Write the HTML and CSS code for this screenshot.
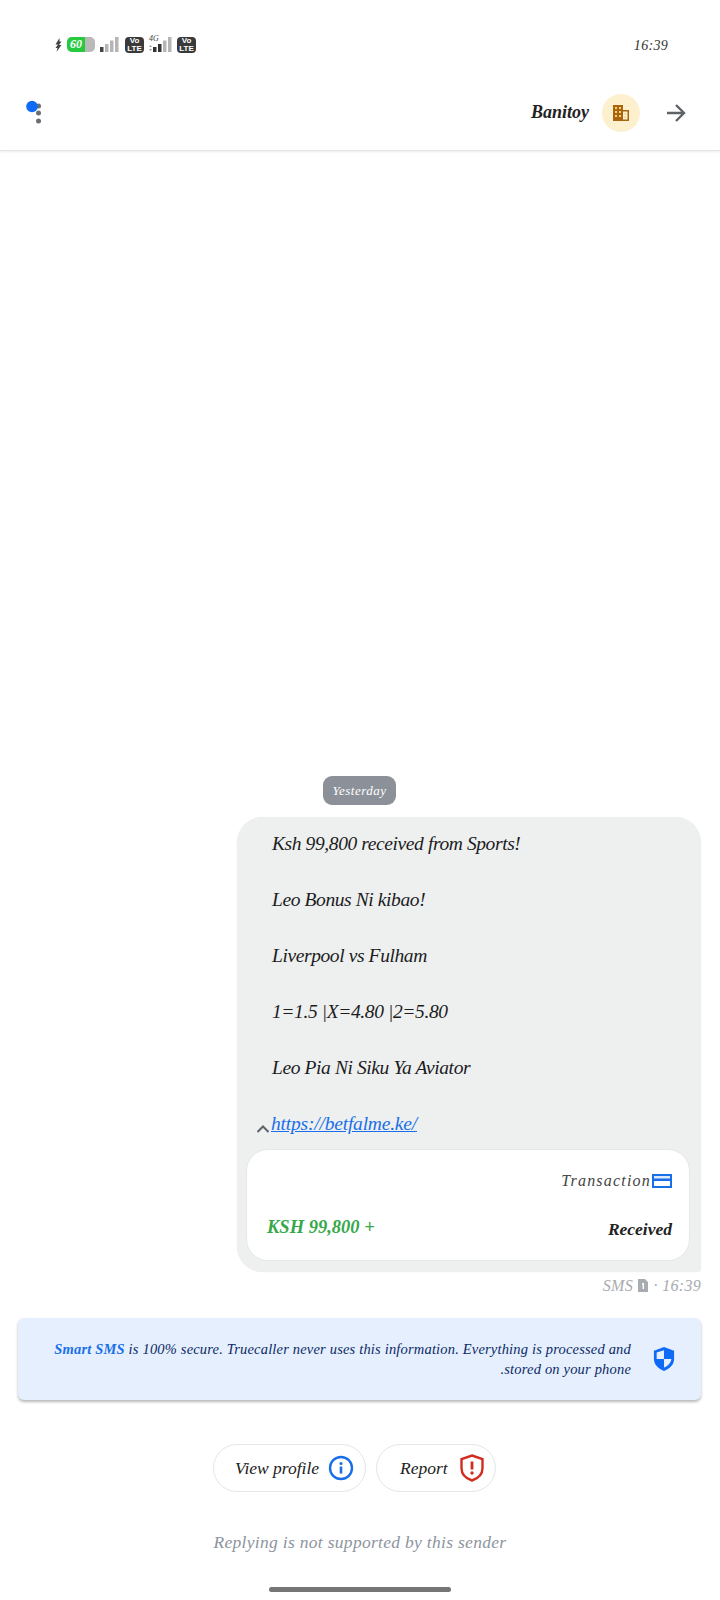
FILE: index.html
```html
<!doctype html>
<html>
<head>
<meta charset="utf-8">
<title>Banitoy</title>
<link rel="stylesheet" href="styles.css">
</head>

<body>
	<div id="page">
		<div class="status">
			<svg class="bolt" width="7" height="14" viewBox="0 0 7 14"><path d="M4.500 0 0.500 6.500 3 6.500 0.500 10 2.500 10 1.500 14 6.500 7 4 7 6.500 3.500 4.500 3.500z" fill="#444"/></svg>
			<div class="battery"><span class="level">60</span></div>
			<svg class="sig" width="19" height="15" viewBox="0 0 19 15"><rect x="0" y="10" width="3.500" height="5" fill="#444"/><rect x="5" y="7" width="3.500" height="8" fill="#b5b5b5"/><rect x="10" y="3.500" width="3.500" height="11.500" fill="#b5b5b5"/><rect x="15" y="0" width="3.500" height="15" fill="#b5b5b5"/></svg>
			<div class="volte">Vo<br>LTE</div>
			<div class="sig4g">
				<span class="net">4G</span>
				<svg width="24" height="15" viewBox="0 0 24 15"><path d="M1 10 2.500 8 4 10zM1 12 2.500 14 4 12z" fill="#999"/><rect x="5" y="10" width="3.500" height="5" fill="#333"/><rect x="10" y="7" width="3.500" height="8" fill="#333"/><rect x="15" y="3.500" width="3.500" height="11.500" fill="#b5b5b5"/><rect x="20" y="0" width="3.500" height="15" fill="#b5b5b5"/></svg>
			</div>
			<div class="volte">Vo<br>LTE</div>
			<span class="clock">16:39</span>
		</div>

		<div class="head">
			<svg class="menu" width="16" height="26" viewBox="0 0 16 26"><circle cx="12.500" cy="6" r="2.500" fill="#6b6f75"/><circle cx="12.500" cy="13" r="2.500" fill="#6b6f75"/><circle cx="12.500" cy="21" r="2.500" fill="#6b6f75"/><circle cx="6" cy="6.500" r="5.800" fill="#0f6bf5"/></svg>
			<span class="name">Banitoy</span>
			<div class="avatar">
				<svg width="16" height="16" viewBox="0 0 16 16"><path d="M0 0h10v5h6v11H0z" fill="#a9660f"/><path d="M10 6.500h4.500v8H10z" fill="#fdf0cf"/><path d="M2 2h2v2H2zM6 2h2v2H6zM2 6h2v2H2zM6 6h2v2H6zM2 10h2v2H2zM6 10h2v2H6zM11.500 8h1.500v1.500h-1.500zM11.500 11.500h1.500v1.500h-1.500z" fill="#f3cf78"/></svg>
			</div>
			<svg class="back" width="20" height="20" viewBox="0 0 20 20"><path d="M1 10h17M10 2l8 8-8 8" fill="none" stroke="#5f6368" stroke-width="2.400"/></svg>
		</div>

		<div class="thread">
			<span class="date">Yesterday</span>
			<div class="bubble">
				<p class="line">Ksh 99,800 received from Sports!</p>
				<p class="line">Leo Bonus Ni kibao!</p>
				<p class="line">Liverpool vs Fulham</p>
				<p class="line">1=1.5 |X=4.80 |2=5.80</p>
				<p class="line">Leo Pia Ni Siku Ya Aviator</p>
				<div class="linkrow">
					<svg width="14" height="10" viewBox="0 0 14 10"><path d="M1.500 8 7 2.500 12.500 8" fill="none" stroke="#5f6368" stroke-width="2"/></svg>
					<a href="javascript:;">https://betfalme.ke/</a>
				</div>
				<div class="card">
					<div class="cardtop">
						<span class="kind">Transaction</span>
						<svg width="20" height="14" viewBox="0 0 20 14"><rect x="0" y="0" width="20" height="14" fill="#1a6fe8"/><rect x="2" y="2" width="16" height="2.500" fill="#dbe9fc"/><rect x="2" y="7" width="16" height="5" fill="#fff"/></svg>
					</div>
					<div class="cardrow">
						<span class="amount">KSH 99,800 +</span>
						<span class="state">Received</span>
					</div>
				</div>
			</div>
			<div class="meta">SMS
				<svg width="12" height="13" viewBox="0 0 12 13"><path d="M1 0h7l3 3v10H1z" fill="#a8abaf"/><path d="M5 4h2v6H5.600V5.500H5z" fill="#fff"/></svg>
				· 16:39</div>
		</div>

		<div class="notice">
			<p class="noticetext" dir="rtl"><span class="noticeline"><b>Smart SMS</b> is 100% secure. Truecaller never uses this information. Everything is processed and</span><span class="noticeline">stored on your phone.</span></p>
			<svg width="22" height="26" viewBox="0 0 24 28"><path d="M12 1 23 5v9c0 6-5 11-11 13C6 25 1 20 1 14V5z" fill="#0f6bf5"/><path d="M12 4.500v9.500H4V6.800zM12 14h8c-.4 4.300-4 7.900-8 9.300z" fill="#e5effd"/></svg>
		</div>

		<div class="btns">
			<a class="btn btnview" href="javascript:;">View profile
				<svg width="26" height="26" viewBox="0 0 26 26"><circle cx="13" cy="13" r="11" fill="none" stroke="#1a6fe8" stroke-width="2.400"/><circle cx="13" cy="8.500" r="1.600" fill="#1a6fe8"/><rect x="11.700" y="11.500" width="2.600" height="7" fill="#1a6fe8"/></svg>
			</a>
			<a class="btn btnreport" href="javascript:;">Report
				<svg width="24" height="28" viewBox="0 0 24 28"><path d="M12 1.500 22.500 5v9c0 6-4.500 10.500-10.500 12.500C6 24.500 1.500 20 1.500 14V5z" fill="none" stroke="#d12c1f" stroke-width="2.400"/><rect x="10.600" y="7.500" width="2.800" height="8" fill="#d12c1f"/><circle cx="12" cy="19" r="1.700" fill="#d12c1f"/></svg>
			</a>
		</div>

		<p class="noreply">Replying is not supported by this sender</p>
		<div class="homebar"></div>
	</div>
</body>
</html>
```

FILE: styles.css
```css
*{
	margin: 0;
	padding: 0;
	box-sizing: border-box;
}
body{
	background: #fff;
	font-family: "Liberation Serif", serif;
	font-style: italic;
	color: #1c1c1e;
}
#page{
	width: 720px;
	height: 1600px;
	display: flex;
	flex-direction: column;
	overflow: hidden;
}

/* status bar */
.status{
	height: 90px;
	padding: 37px 52px 0 55px;
	display: flex;
	align-items: flex-start;
}
.status .bolt{
	margin-top: 1px;
}
.battery{
	width: 28px;
	height: 15px;
	margin-left: 5px;
	border-radius: 5px;
	overflow: hidden;
	background: #b9b9b9;
}
.level{
	display: block;
	width: 18px;
	height: 15px;
	background: #27c93f;
	color: #fff;
	font-size: 12px;
	font-weight: bold;
	line-height: 15px;
	text-align: center;
}
.sig{
	margin-left: 5px;
}
.volte{
	width: 19px;
	height: 16px;
	margin-left: 6px;
	border-radius: 4px;
	background: #3a3a3a;
	color: #fff;
	font: bold 8px/7.500px "Liberation Sans", sans-serif;
	text-align: center;
}
.sig4g{
	position: relative;
	margin-left: 4px;
}
.net{
	position: absolute;
	top: -3px;
	left: 1px;
	font-size: 8px;
	color: #444;
}
.sig4g + .volte{
	margin-left: 5px;
}
.clock{
	margin-left: auto;
	font-size: 14px;
	letter-spacing: .3px;
	color: #333;
	line-height: 17px;
}

/* header */
.head{
	height: 61px;
	padding: 0 34px 15px 26px;
	display: flex;
	align-items: center;
	border-bottom: 1px solid #e4e4e4;
	box-shadow: 0 1px 2px rgba(0,0,0,.08);
}
.menu{
	margin-right: auto;
}
.name{
	font-size: 18px;
	font-weight: bold;
	color: #222;
}
.avatar{
	width: 38px;
	height: 38px;
	margin-left: 13px;
	border-radius: 50%;
	background: #fdf0cf;
	display: flex;
	align-items: center;
	justify-content: center;
}
.back{
	margin-left: 26px;
}

/* messages */
.thread{
	flex: 1;
	padding-right: 19px;
	display: flex;
	flex-direction: column;
	justify-content: flex-end;
	align-items: flex-end;
}
.date{
	width: 73px;
	height: 29px;
	margin: 0 auto 12px 323px;
	border-radius: 9px;
	background: #8b9099;
	color: #fff;
	font-size: 13px;
	line-height: 29px;
	letter-spacing: .5px;
	text-align: center;
}
.bubble{
	width: 464px;
	height: 455px;
	padding: 13px 11px 11px 10px;
	border-radius: 26px 26px 4px 26px;
	background: #eef0f0;
	box-shadow: 0 0 1px rgba(0,0,0,.12);
}
.line{
	height: 28px;
	margin: 0 0 28px 25px;
	font-size: 19.500px;
	line-height: 28px;
	letter-spacing: -.4px;
}
.linkrow{
	height: 28px;
	margin-left: 10px;
	display: flex;
	align-items: center;
}
.linkrow svg{
	margin: 10px 1px 0 -1px;
}
.linkrow a{
	font-size: 19.500px;
	line-height: 28px;
	color: #1a6fe8;
	letter-spacing: -.2px;
}
.card{
	height: 112px;
	margin-top: 11px;
	margin-left: -1px;
	padding: 21px 17px 0 20px;
	border: 1px solid #e6e8e8;
	border-radius: 22px;
	background: #fff;
}
.cardtop{
	display: flex;
	justify-content: flex-end;
	align-items: center;
	height: 20px;
}
.kind{
	font-size: 16px;
	letter-spacing: 1.200px;
	color: #444;
}
.cardtop svg{
	margin-left: 1px;
}
.cardrow{
	height: 26px;
	margin-top: 23px;
	display: flex;
	justify-content: space-between;
	align-items: center;
}
.amount{
	font-size: 18.500px;
	font-weight: bold;
	color: #36a84a;
}
.state{
	margin-top: 4px;
	font-size: 17.500px;
	font-weight: bold;
	color: #222;
}
.meta{
	height: 31px;
	padding-top: 5px;
	font-size: 16px;
	letter-spacing: .3px;
	color: #a8abaf;
}
.meta svg{
	vertical-align: -1px;
}

/* notice */
.notice{
	width: 683px;
	height: 82px;
	margin: 15px 19px 0 18px;
	padding: 0 26px 0 36px;
	display: flex;
	align-items: center;
	border-radius: 6px;
	background: #e5effd;
	box-shadow: 0 2px 3px rgba(0,0,0,.28);
}
.noticetext{
	flex: 1;
	font-size: 14.500px;
	line-height: 20px;
	letter-spacing: .18px;
	color: #0c2a66;
	margin-right: 22px;
}
.noticeline{
	display: block;
	white-space: nowrap;
}
.noticetext b{
	color: #1a6fe8;
}

/* buttons */
.btns{
	margin-top: 44px;
	padding-left: 213px;
	display: flex;
	gap: 10px;
}
.btn{
	height: 48px;
	display: flex;
	align-items: center;
	border: 1px solid #e4e6e8;
	border-radius: 24px;
	font-size: 17.500px;
	white-space: nowrap;
	color: #222;
	text-decoration: none;
}
.btnview{
	width: 153px;
	padding-left: 21px;
	gap: 9px;
}
.btnreport{
	width: 120px;
	padding-left: 23px;
	gap: 12px;
}
.noreply{
	margin-top: 37px;
	font-size: 17.500px;
	line-height: 26px;
	letter-spacing: .3px;
	color: #8d949e;
	text-align: center;
}
.homebar{
	width: 182px;
	height: 5px;
	margin: 32px auto 8px;
	border-radius: 3px;
	background: #757575;
}
```
